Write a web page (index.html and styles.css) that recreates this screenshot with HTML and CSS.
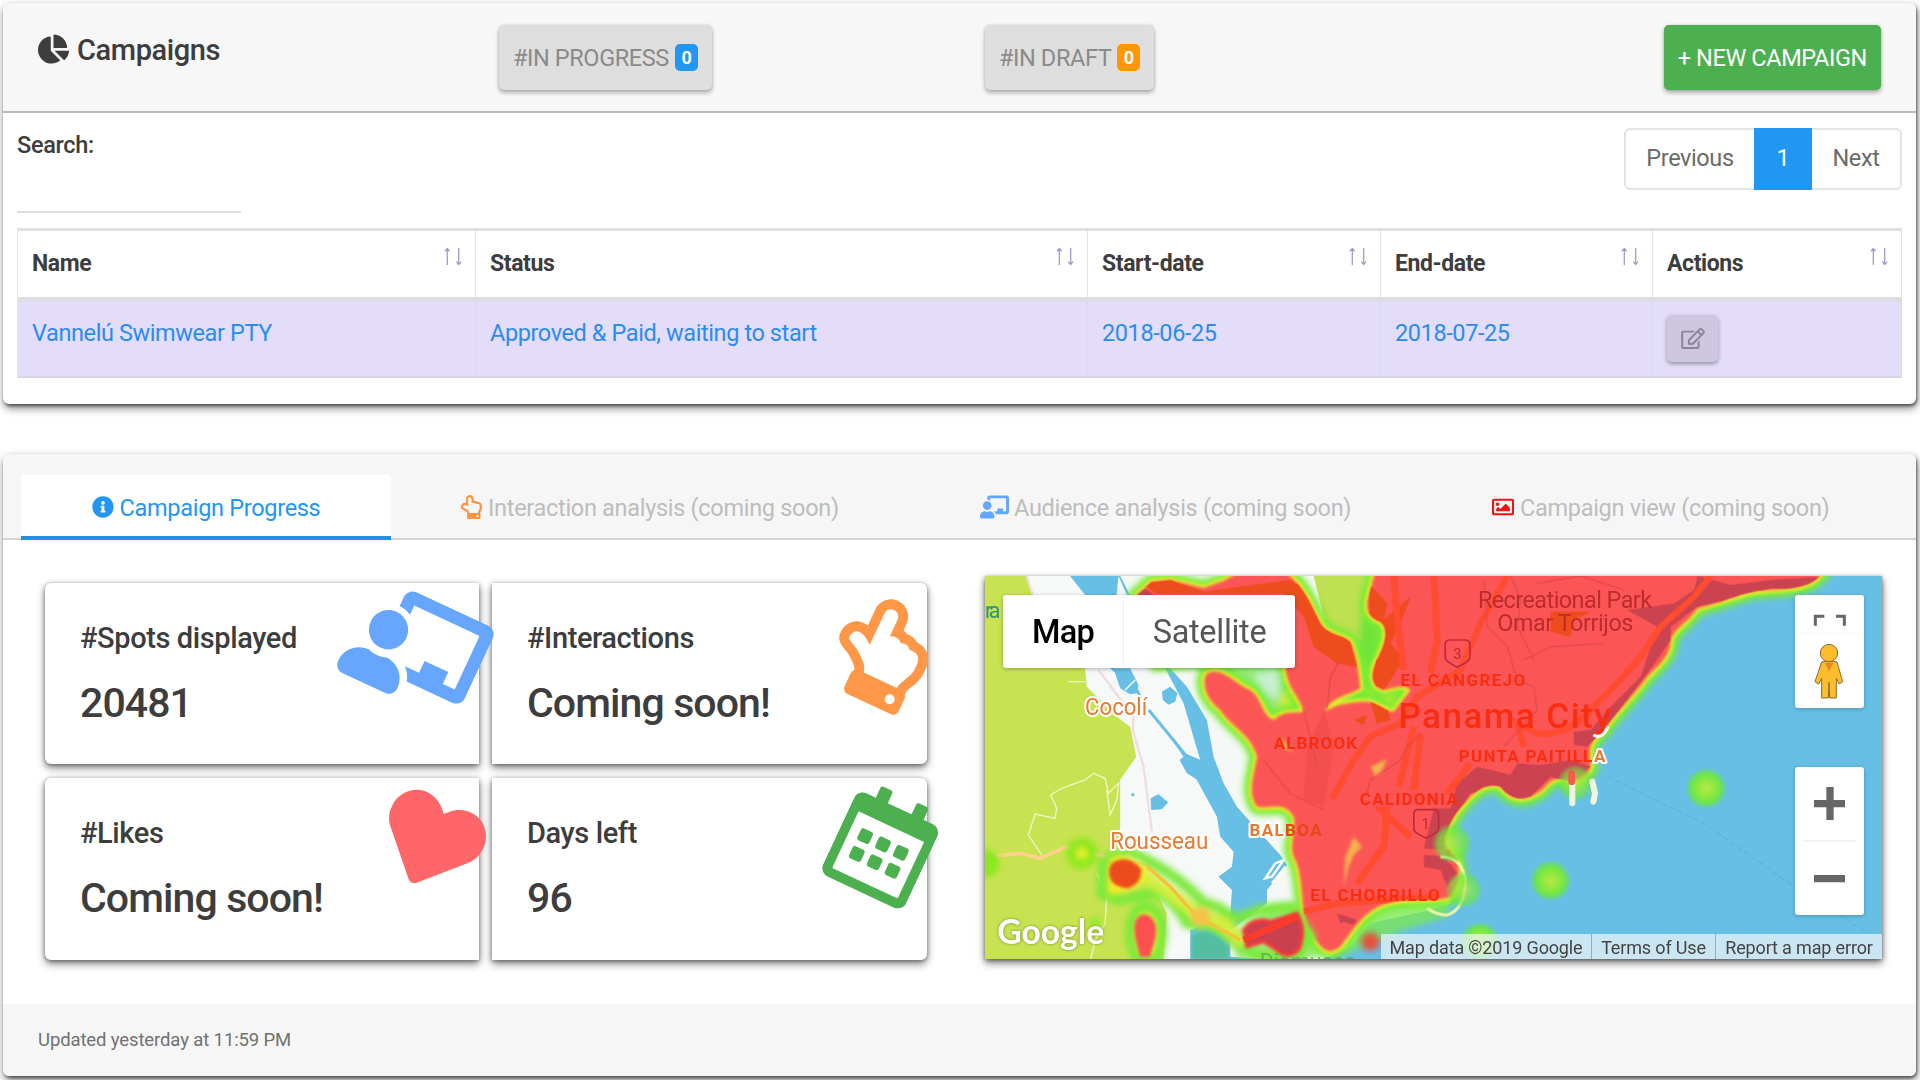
FILE: index.html
```html
<!DOCTYPE html>
<html lang="en">
<head>
<meta charset="utf-8">
<title>Campaigns</title>
<link rel="stylesheet" href="styles.css">
</head>
<body>
<svg width="0" height="0" class="defs" aria-hidden="true">
  <symbol id="i-pie" viewBox="0 0 544 512"><path d="M527.79 288H290.5l158.03 158.03c6.04 6.04 15.98 6.53 22.19.68 38.7-36.46 65.32-85.61 73.13-140.86 1.34-9.46-6.51-17.85-16.06-17.85zm-15.83-64.8C503.72 103.74 408.26 8.28 288.8.04 279.68-.59 272 7.1 272 16.24V240h223.77c9.14 0 16.82-7.68 16.19-16.8zM224 288V50.71c0-9.55-8.39-17.4-17.84-16.06C86.99 51.49-4.1 155.6.14 280.37 4.5 408.51 114.83 513.59 243.03 511.98c50.4-.63 96.97-16.87 135.26-44.03 7.9-5.6 8.42-17.23 1.57-24.08L224 288z"/></symbol>
  <symbol id="i-info" viewBox="0 0 512 512"><path d="M256 8C119 8 8 119 8 256s111 248 248 248 248-111 248-248S393 8 256 8zm0 110a42 42 0 1 1 0 84 42 42 0 0 1 0-84zm56 254c0 7-5 12-12 12h-88c-7 0-12-5-12-12v-24c0-7 5-12 12-12h12v-64h-12c-7 0-12-5-12-12v-24c0-7 5-12 12-12h64c7 0 12 5 12 12v100h12c7 0 12 5 12 12z"/></symbol>
  <symbol id="i-hand" viewBox="0 0 448 512"><path d="M105.6 83.200v86.177a115.520 115.520 0 0 0-22.400-2.176c-47.914 0-83.200 35.072-83.200 92 0 45.314 48.537 57.002 78.784 75.707 12.413 7.735 23.317 16.994 33.253 25.851l.146.131.148.129C129.807 376.338 136 384.236 136 391.200v2.679c-4.952 5.747-8 13.536-8 22.120v64c0 17.673 12.894 32 28.800 32h230.400c15.906 0 28.800-14.327 28.800-32v-64c0-8.584-3.048-16.373-8-22.120V391.200c0-28.688 40-67.137 40-127.200v-21.299c0-62.542-38.658-98.800-91.145-99.940-17.813-12.482-40.785-18.491-62.791-15.985A93.148 93.148 0 0 0 272 118.847V83.200C272 37.765 234.416 0 188.800 0c-45.099 0-83.200 38.101-83.200 83.200zm118.400 0v91.026c14.669-12.837 42.825-14.415 61.050 4.950 19.646-11.227 45.624-1.687 53.625 12.925 39.128-6.524 61.325 10.076 61.325 50.600V264c0 45.491-35.913 77.210-39.676 120H183.571c-2.964-25.239-21.222-42.966-39.596-59.075-12.650-11.341-25.300-21.682-39.625-30.250C82.500 281.500 47.600 270.300 48 259.200c0-24.400 11.200-44 35.200-44 22.200 0 49.600 17.600 70.400 35.200V83.200c0-18.700 16.500-35.200 35.200-35.200 18.976 0 35.200 16.224 35.200 35.200zM352 424c13.255 0 24 10.745 24 24s-10.745 24-24 24-24-10.745-24-24 10.745-24 24-24z" fill-rule="evenodd"/></symbol>
  <symbol id="i-teach" viewBox="0 0 640 512"><path d="M208 352c-2.39 0-4.78.35-7.06 1.09C187.98 357.3 174.35 360 160 360c-14.35 0-27.98-2.7-40.95-6.91-2.28-.74-4.66-1.09-7.05-1.09C49.94 352-.33 402.48 0 464.62.14 490.88 21.73 512 48 512h224c26.27 0 47.86-21.12 48-47.38.33-62.14-49.94-112.62-112-112.62zm-48-32c53.02 0 96-42.98 96-96s-42.98-96-96-96-96 42.98-96 96 42.98 96 96 96zM592 0H208c-26.47 0-48 22.25-48 49.59V96c23.42 0 45.1 6.78 64 17.8V64h352v288h-64v-64H384v64h-76.24c19.1 16.69 33.12 38.73 39.69 64H592c26.47 0 48-22.25 48-49.59V49.59C640 22.25 618.47 0 592 0z"/></symbol>
  <symbol id="i-image" viewBox="0 0 512 512"><path d="M464 64H48C21.5 64 0 85.5 0 112v288c0 26.500 21.500 48 48 48h416c26.500 0 48-21.500 48-48V112c0-26.500-21.500-48-48-48zm-6 336H54c-3.300 0-6-2.700-6-6V118c0-3.300 2.700-6 6-6h404c3.300 0 6 2.700 6 6v276c0 3.300-2.700 6-6 6zM128 152c-22 0-40 18-40 40s18 40 40 40 40-18 40-40-18-40-40-40zM96 352h320v-80l-87.500-87.500c-4.700-4.700-12.300-4.700-17 0L192 304l-39.500-39.500c-4.700-4.700-12.300-4.700-17 0L96 304v48z" fill-rule="evenodd"/></symbol>
  <symbol id="i-heart" viewBox="0 0 512 512"><path d="M462.300 62.600C407.500 15.900 326 24.300 275.700 76.200L256 96.500l-19.700-20.300C186.100 24.300 104.500 15.900 49.700 62.600c-62.800 53.600-66.100 149.800-9.900 207.900l193.500 199.800c12.500 12.900 32.800 12.900 45.300 0l193.500-199.800c56.300-58.100 53-154.300-9.800-207.900z"/></symbol>
  <symbol id="i-cal" viewBox="0 0 448 512"><path d="M148 288h-40c-6.600 0-12-5.400-12-12v-40c0-6.600 5.400-12 12-12h40c6.600 0 12 5.400 12 12v40c0 6.600-5.400 12-12 12zm108-12v-40c0-6.600-5.400-12-12-12h-40c-6.600 0-12 5.400-12 12v40c0 6.600 5.400 12 12 12h40c6.600 0 12-5.400 12-12zm96 0v-40c0-6.600-5.400-12-12-12h-40c-6.600 0-12 5.400-12 12v40c0 6.600 5.400 12 12 12h40c6.600 0 12-5.400 12-12zm-96 96v-40c0-6.600-5.400-12-12-12h-40c-6.600 0-12 5.400-12 12v40c0 6.600 5.400 12 12 12h40c6.600 0 12-5.400 12-12zm-96 0v-40c0-6.600-5.400-12-12-12h-40c-6.600 0-12 5.400-12 12v40c0 6.600 5.400 12 12 12h40c6.600 0 12-5.400 12-12zm192 0v-40c0-6.600-5.400-12-12-12h-40c-6.600 0-12 5.400-12 12v40c0 6.600 5.400 12 12 12h40c6.600 0 12-5.400 12-12zm96-260v352c0 26.500-21.500 48-48 48H48c-26.500 0-48-21.500-48-48V112c0-26.500 21.500-48 48-48h48V12c0-6.600 5.400-12 12-12h40c6.600 0 12 5.400 12 12v52h128V12c0-6.600 5.400-12 12-12h40c6.600 0 12 5.400 12 12v52h48c26.500 0 48 21.500 48 48zm-48 346V160H48v298c0 3.300 2.700 6 6 6h340c3.300 0 6-2.700 6-6z"/></symbol>
  <symbol id="i-edit" viewBox="0 0 576 512"><path d="M402.300 344.900l32-32c5-5 13.700-1.500 13.700 5.700V464c0 26.500-21.500 48-48 48H48c-26.500 0-48-21.500-48-48V112c0-26.500 21.500-48 48-48h273.500c7.100 0 10.700 8.600 5.700 13.700l-32 32c-1.500 1.500-3.500 2.300-5.700 2.300H48v352h352V350.500c0-2.100.8-4.100 2.300-5.600zm156.600-201.800L296.300 405.700l-90.400 10c-26.200 2.900-48.500-19.200-45.600-45.600l10-90.400L432.900 17.100c22.900-22.900 59.900-22.900 82.700 0l43.200 43.200c22.900 22.900 22.900 60 .1 82.800zM460.100 174L402 115.900 216.200 301.800l-7.300 65.300 65.300-7.300L460.100 174zm64.800-79.700l-43.200-43.200c-4.100-4.100-10.800-4.100-14.800 0L436 82l58.100 58.100 30.900-30.900c4-4.200 4-10.800-.1-14.900z"/></symbol>
  <symbol id="i-sort" viewBox="0 0 20 20"><path d="M4 19V2M1.500 4.500L4 1.500l2.500 3M16 1v17M13.500 15.500l2.500 3 2.500-3" fill="none" stroke="currentColor" stroke-width="1.300"/></symbol>
</svg>

<section class="panel campaigns">
  <header class="panel-head">
    <h1 class="title"><svg class="pie"><use href="#i-pie"/></svg>Campaigns</h1>
    <div class="col-progress"><button class="btn grey">#IN PROGRESS<span class="badge blue">0</span></button></div>
    <div class="col-draft"><button class="btn grey">#IN DRAFT<span class="badge orange">0</span></button></div>
    <button class="btn green">+ NEW CAMPAIGN</button>
  </header>
  <div class="tools">
    <label class="search">Search:<input type="text" class="search-input"></label>
    <nav class="pager"><span class="page prev">Previous</span><span class="page current">1</span><span class="page next">Next</span></nav>
  </div>
  <table class="list">
    <colgroup><col class="c-name"><col class="c-status"><col class="c-start"><col class="c-end"><col class="c-actions"></colgroup>
    <thead><tr>
      <th><div class="th">Name<svg class="sort"><use href="#i-sort"/></svg></div></th>
      <th><div class="th">Status<svg class="sort"><use href="#i-sort"/></svg></div></th>
      <th><div class="th">Start-date<svg class="sort"><use href="#i-sort"/></svg></div></th>
      <th><div class="th">End-date<svg class="sort"><use href="#i-sort"/></svg></div></th>
      <th><div class="th">Actions<svg class="sort"><use href="#i-sort"/></svg></div></th>
    </tr></thead>
    <tbody><tr>
      <td>Vannelú Swimwear PTY</td><td>Approved &amp; Paid, waiting to start</td><td>2018-06-25</td><td>2018-07-25</td>
      <td><button class="edit"><svg><use href="#i-edit"/></svg></button></td>
    </tr></tbody>
  </table>
</section>

<section class="panel details">
  <nav class="tabs">
    <a class="tab active"><svg class="ti info"><use href="#i-info"/></svg>Campaign Progress</a>
    <a class="tab t2"><svg class="ti hand"><use href="#i-hand"/></svg>Interaction analysis (coming soon)</a>
    <a class="tab t3"><svg class="ti teach"><use href="#i-teach"/></svg>Audience analysis (coming soon)</a>
    <a class="tab t4"><svg class="ti image"><use href="#i-image"/></svg>Campaign view (coming soon)</a>
  </nav>
  <div class="content">
    <div class="stats">
      <article class="stat left"><h2>#Spots displayed</h2><p>20481</p><svg class="big b-teach" preserveAspectRatio="none"><use href="#i-teach"/></svg></article>
      <article class="stat right"><h2>#Interactions</h2><p>Coming soon!</p><svg class="big b-hand"><use href="#i-hand"/></svg></article>
      <article class="stat left"><h2>#Likes</h2><p>Coming soon!</p><svg class="big b-heart"><use href="#i-heart"/></svg></article>
      <article class="stat right"><h2>Days left</h2><p>96</p><svg class="big b-cal"><use href="#i-cal"/></svg></article>
    </div>
    <div class="map">
      <svg class="canvas" viewBox="45 48 2688 1149" preserveAspectRatio="none">
        <defs>
          <filter id="soft" x="-20%" y="-20%" width="140%" height="140%"><feGaussianBlur stdDeviation="9"/></filter>
          <filter id="soft2" x="-20%" y="-20%" width="140%" height="140%"><feGaussianBlur stdDeviation="4"/></filter>
          <radialGradient id="spot"><stop offset="0" stop-color="#b8e84c"/><stop offset=".4" stop-color="#8fe93c"/><stop offset=".7" stop-color="#6de83e" stop-opacity=".9"/><stop offset="1" stop-color="#68e060" stop-opacity="0"/></radialGradient>
          <path id="heat" d="M500 105L545 65L600 60L700 84L760 62L800 40L950 40C1000 80 1020 130 1050 190C1070 225 1120 225 1140 245C1160 290 1165 340 1170 385C1130 410 1080 410 1065 455C1100 430 1130 430 1170 425C1220 420 1240 455 1270 455L1320 390C1300 370 1270 385 1240 390C1200 380 1200 340 1220 300C1240 260 1260 210 1230 185C1200 175 1180 150 1195 110L1215 30H2560C2530 80 2480 85 2400 90C2320 90 2270 125 2180 145C2150 190 2110 205 2100 240C2100 290 2060 320 2030 350C1980 420 1940 450 1900 510C1850 550 1855 570 1860 620C1850 650 1820 665 1800 665C1760 645 1740 660 1715 690C1660 730 1620 720 1590 680C1560 670 1530 680 1500 710C1460 750 1420 800 1425 860C1470 890 1480 950 1440 1010C1380 1030 1320 1010 1250 1030C1180 1050 1150 1110 1110 1160C1060 1200 1040 1140 1010 1100C990 1040 1000 960 975 900C950 860 980 820 970 770C940 720 900 750 860 740C830 700 850 650 860 590C840 520 780 500 750 450C710 420 690 370 710 340C760 320 790 370 840 390C880 420 870 460 910 480C940 450 970 460 1000 455C990 410 940 380 945 300L700 300L560 310L500 200Z"/>
          <clipPath id="heatclip"><use href="#heat"/></clipPath>
        </defs>
        <rect x="45" y="48" width="2688" height="1149" fill="#68bfe6"/>
        <!-- land west of the canal -->
        <path d="M45 48H300L345 105L420 325L500 400L545 450L640 590L680 660L740 770L750 830L790 875L785 920L745 950L785 990L780 1060L660 1110V1197H45Z" fill="#f7f8f8"/>
        <path d="M445 48L470 105L585 325L640 430L690 600L650 585L530 440L505 390L490 350L430 325L440 100Z" fill="#f7f8f8"/>
        <path d="M450 48H1440V1030L1380 1050L1200 1090L1140 1160L1060 1197H900L780 1190L780 1110L890 1030L890 990L950 915L930 885L880 830L800 740L760 670L730 590L710 480L650 380L600 325L480 105Z" fill="#f5f8f6"/>
        <path d="M45 48H170L185 100L345 325L350 380L440 470L480 500L498 590L450 660V800L440 880L540 960L590 1060L580 1197H45Z" fill="#c8e351"/>
        <path d="M1030 48H1215L1190 150L1230 190L1200 370L1170 370L1140 240L1070 210Z" fill="#bfe052"/>
        <path d="M430 325H480L505 375L500 400L480 403L450 385ZM575 395L600 380L622 400L615 425L595 434L578 420ZM541 715L565 703L594 727L575 748L543 750ZM628 600L650 582L690 600L720 660L690 665L650 640Z" fill="#68bfe6"/>
        <path d="M465 390L495 360" stroke="#eef4f6" stroke-width="5"/>
        <path d="M536 450L650 590" stroke="#68bfe6" stroke-width="9"/>
        <circle cx="488" cy="704" r="5" fill="#68bfe6"/>
        <path d="M885 955L915 910L940 900L905 950ZM905 970L945 920" stroke="#fff" stroke-width="7" fill="#68bfe6"/>
        <g fill="none" stroke="#f0f5c8" stroke-width="4">
          <path d="M215 885L175 825L195 762L255 775L260 745L242 705L275 685L345 660L370 640L405 655L415 700L445 670L440 720L420 765L410 690M295 365H345M380 940L410 1010L405 1090L375 1140L362 1197"/>
        </g>
        <path d="M385 330L490 470L488 510L520 620L545 815M170 48L190 110" fill="none" stroke="#eedfdc" stroke-width="7"/>
        <path d="M80 887L150 880L210 895L285 862L340 878L390 885L530 915L600 980L680 1070L810 1140" fill="none" stroke="#ffd18a" stroke-width="11"/>
        <!-- density overlay -->
        <g filter="url(#soft)">
          <path d="M640 325L945 325L1000 455L900 490L870 440L840 390L740 335Z" fill="#7de65a" opacity=".8"/>
          <path d="M850 345L930 330L920 420L890 400Z" fill="#c8efcf"/>
          <path d="M945 370L1005 455L900 490L925 440Z" fill="#d5ea3a"/>
          <path d="M1170 170L1240 195L1205 320L1170 320Z" fill="#70e23a"/>
          <path d="M1175 370L1210 385L1320 385L1270 450L1170 425L1070 450L1090 405Z" fill="#cfe62c"/>
          <path d="M900 1040L1440 1000L1430 1070L1300 1110L1130 1180L1000 1197H800L780 1130Z" fill="#7be84d" opacity=".75"/>
          <use href="#heat" fill="none" stroke="#78eb34" stroke-width="48"/>
        </g>
        <use href="#heat" fill="none" stroke="#e6f52c" stroke-width="17" filter="url(#soft2)"/>
        <use href="#heat" fill="#fc5556" filter="url(#soft2)"/>
        <g clip-path="url(#heatclip)">
          <g fill="#cb4350">
            <path d="M2180 48L2280 75L2400 60L2600 48V90L2400 85L2270 120L2180 140L2100 200L2100 240L2030 340L1900 510L1850 560L1810 555V515L1860 510L1920 440L2010 350L2060 200L1970 150L2110 130L2170 90Z"/>
            <path d="M1460 670L1520 620L1620 645L1640 610L1710 615L1800 600L1860 620L1800 670L1740 650L1660 730L1590 690L1500 700L1420 830L1430 900L1460 940L1430 980L1410 930L1360 920V885L1440 890V870L1360 865L1390 745H1440Z"/>
            <path d="M500 105L525 85L550 105ZM1100 1060L1160 1080L1150 1095L1120 1085L1110 1090Z"/>
          </g>
          <path d="M510 70L600 60L700 95L960 60L1010 90L1050 190L1110 225L1140 245L1160 320L1100 310L1030 260L1000 170L940 100H560ZM1195 70L1250 130L1240 180L1320 110L1290 190L1260 250L1300 300L1240 390L1200 370ZM1150 480L1190 465L1180 495ZM1200 425L1250 440L1260 480L1220 490ZM1740 155L1860 155L1810 180L1800 230L1740 215Z" fill="#ee4c1c"/>
          <path d="M1060 450L1090 560L1060 740L1000 720L1010 570Z" fill="#ef4d4d" opacity=".7"/>
          <g fill="none" stroke="#ff4b30" stroke-width="22">
            <path d="M1085 715L1150 600L1200 530L1290 490L1340 410L1470 330L1530 190L1610 48" stroke-width="18"/>
            <path d="M1285 680L1330 500M1330 690L1350 520M1270 48L1280 180L1300 330M1390 48L1400 240L1380 340M1430 700L1500 610M1220 740L1320 830M1250 740L1240 860L1160 970" stroke-width="20"/>
            <path d="M2220 48L2170 110L2070 200L2010 290L1940 370L1850 460Q1780 530 1700 520L1640 490L1660 560" stroke-width="19"/>
            <path d="M800 1130L980 1060L1100 1030L1400 1010" stroke-width="20"/>
          </g>
          <g fill="none" stroke="#d9484f" stroke-width="3">
            <path d="M1350 520L1310 560L1290 600L1200 660L1190 700M1540 60L1550 200L1610 260L1640 360L1690 380L1700 450L1600 560M1620 48L1650 120L1640 200L1690 300M1700 70L1830 48L1960 90M1660 300L1740 260L1900 250M1040 620L1000 450L920 330M880 600L960 700L1060 750M1110 300L1080 350L1070 450"/>
          </g>
          <g fill="#f5b050" filter="url(#soft2)"><path d="M1200 620L1250 597L1235 630L1215 650ZM1150 830L1175 860L1150 885L1135 920L1120 980L1125 890ZM925 525L970 575L940 565Z"/></g>
        </g>
        <g filter="url(#soft)">
          <circle cx="335" cy="880" r="46" fill="#8ae81d"/><circle cx="48" cy="910" r="40" fill="#8ae81d"/><circle cx="375" cy="1090" r="22" fill="#a0e830"/>
          <path d="M400 910Q450 850 530 900Q640 960 700 1030Q760 1040 790 1080L870 1050L960 1040L1020 1130L980 1190H870L800 1150L720 1100L650 1090Q600 1000 540 1000L450 1020L395 1000Z" fill="none" stroke="#7ce93a" stroke-width="32"/>
          <path d="M525 1040C590 1050 580 1130 560 1197H500C470 1130 475 1050 525 1040Z" fill="#e6f52c" stroke="#7ce93a" stroke-width="32"/>
          <path d="M500 930L600 1000L680 1060L760 1090L820 1150" fill="none" stroke="#d4ee40" stroke-width="38"/>
          <circle cx="335" cy="880" r="18" fill="#e6ee30"/>
        </g>
        <path d="M530 920L600 980L680 1070L810 1140" fill="none" stroke="#f5c23a" stroke-width="10"/>
        <path d="M420 895Q470 870 525 925Q535 965 480 990L415 1005Z" fill="#f5ec20" filter="url(#soft)"/>
        <path d="M425 910Q470 880 512 925Q520 965 475 985Q410 980 418 925Z" fill="#ee4c1c" filter="url(#soft2)"/>
        <path d="M495 1085C510 1050 550 1060 557 1100C560 1140 545 1160 540 1190H510C500 1150 488 1120 495 1085Z" fill="#fc5050" filter="url(#soft2)"/>
        <path d="M820 1110Q850 1070 900 1085L980 1060Q1010 1110 985 1170Q950 1200 920 1170L880 1145L830 1160Z" fill="#c9414f" stroke="#fb3535" stroke-width="10" filter="url(#soft2)"/>
        <path d="M820 1140L980 1070" stroke="#fd3b2c" stroke-width="20"/>
        <path d="M665 1130Q710 1090 775 1160V1197H665Z" fill="#52bfa0" filter="url(#soft2)"/>
        <circle cx="690" cy="1070" r="28" fill="#f8bf48" filter="url(#soft)"/>
        <circle cx="1200" cy="1145" r="28" fill="#e6503a" filter="url(#soft)"/>
        <path d="M1410 890Q1480 890 1485 970Q1480 1050 1430 1065Q1400 1065 1370 1045" fill="none" stroke="#e9f5a8" stroke-width="9"/>
        <circle cx="1445" cy="850" r="62" fill="url(#spot)" opacity=".75"/><circle cx="1480" cy="990" r="58" fill="url(#spot)" opacity=".7"/>
        <circle cx="2206" cy="685" r="64" fill="url(#spot)"/><circle cx="1740" cy="962" r="64" fill="url(#spot)"/><circle cx="1528" cy="1145" r="62" fill="url(#spot)"/>
        <circle cx="1815" cy="670" r="58" fill="url(#spot)" opacity=".7"/>
        <path d="M1805 675V730M1865 665L1873 700L1868 725" fill="none" stroke="#edf7dd" stroke-width="18" stroke-linecap="round"/>
        <path d="M1803 640V665" stroke="#f65a4a" stroke-width="20" stroke-linecap="round"/>
        <path d="M1910 650L2200 790L2470 980L2690 1120" fill="none" stroke="#5ab1da" stroke-width="3" stroke-dasharray="18 8"/>
        <!-- labels -->
        <g class="lbl">
          <text x="45" y="174" font-size="64" fill="#2c9180" textLength="46">ra</text>
          <g fill="#e9792e" stroke="#fff" stroke-width="12" paint-order="stroke" stroke-linejoin="round">
            <text x="345" y="464" font-size="70" textLength="186" lengthAdjust="spacingAndGlyphs">Cocolí</text>
            <text x="420" y="866" font-size="70" textLength="294" lengthAdjust="spacingAndGlyphs">Rousseau</text>
            <text x="838" y="827" font-size="51" font-weight="700" textLength="102">BAL</text>
            <text x="1870" y="606" font-size="51" font-weight="700">A</text>
          </g>
          <g fill="#fa2d10" font-weight="700">
            <text x="944" y="827" font-size="51" textLength="110" fill="#e54518">BOA</text>
            <text x="910" y="567" font-size="51" textLength="250">ALBROOK</text>
            <text x="1290" y="379" font-size="51" textLength="374">EL CANGREJO</text>
            <text x="1168" y="734" font-size="51" textLength="294">CALIDONIA</text>
            <text x="1465" y="606" font-size="51" textLength="400">PUNTA PAITILL</text>
            <text x="1020" y="1022" font-size="51" textLength="388">EL CHORRILLO</text>
            <text x="1284" y="504" font-size="105" textLength="638" font-weight="500">Panama City</text>
          </g>
          <path d="M1868 525Q1895 540 1912 500" fill="none" stroke="#fff" stroke-width="9"/>
          <g fill="#bd2b2b">
            <text x="1522" y="143" font-size="70" textLength="522">Recreational Park</text>
            <text x="1580" y="214" font-size="70" textLength="408">Omar Torrijos</text>
            <text x="1448" y="296" font-size="44">3</text>
            <text x="1353" y="807" font-size="44">1</text>
          </g>
          <path d="M1434 240H1486Q1498 242 1498 254V295Q1494 305 1460 322Q1427 305 1424 295V254Q1424 242 1434 240ZM1340 749H1394Q1404 750 1404 762V810Q1400 820 1367 834Q1334 820 1330 810V762Q1330 750 1340 749Z" fill="none" stroke="#bd2b3b" stroke-width="5"/>
          <text x="868" y="1228" font-size="64" fill="#4aa05a" textLength="290" opacity=".7">Diamuseo</text>
          <text x="82" y="1153" font-size="104" fill="#fff" class="glogo" textLength="320" lengthAdjust="spacingAndGlyphs">Google</text>
        </g>
      </svg>
      <div class="types"><span class="type on">Map</span><span class="type">Satellite</span></div>
      <div class="pegbox">
        <svg viewBox="0 0 207 339"><path d="M61 92V64H88M123 64H148V92" fill="none" stroke="#666" stroke-width="9"/><path d="M12 114H195" stroke="#f2f2f2" stroke-width="2"/><g fill="#fbbd2b" stroke="#8a6b33" stroke-width="3"><path d="M80 201Q102 192 126 201L143 260L133 267L124 250V309H104L102 262L100 309H80V250L71 267L60 260Z"/><circle cx="102" cy="174" r="26"/></g><path d="M90 203H115L102 230Z" fill="#e6881f"/></svg>
      </div>
      <div class="zoombox">
        <svg viewBox="0 0 207 444"><path d="M57 110H150M105 60V159M57 335H150" stroke="#666" stroke-width="22"/><path d="M25 222H182" stroke="#e2e2e2" stroke-width="3"/></svg>
      </div>
      <div class="credits"><span class="c1">Map data ©2019 Google</span><span class="c2">Terms of Use</span><span class="c3">Report a map error</span></div>
    </div>
  </div>
  <footer class="foot">Updated yesterday at 11:59 PM</footer>
</section>
</body>
</html>
```
FILE: styles.css
```css
* { box-sizing: border-box; }
body { margin: 0; height: 1080px; overflow: hidden; padding: 3px 4px 0 3px; background: #fff; color: #3d3d3d; font-family: Roboto, "Liberation Sans", sans-serif; font-size: 23.500px; letter-spacing: -.4px; }
.defs { position: absolute; }
svg { fill: currentColor; display: block; flex: none; }
h1, h2, p { margin: 0; font-weight: 500; }
button { font: inherit; letter-spacing: inherit; border: 0; }

.panel { background: #fff; border-radius: 6px; box-shadow: 1px 4px 9px rgba(0,0,0,.5), 1px 2px 3px rgba(0,0,0,.45); }
.campaigns { height: 401px; }
.details { margin-top: 50px; height: 622px; display: flex; flex-direction: column; }

.panel-head { height: 110px; display: flex; align-items: flex-start; background: #f7f7f7; border-bottom: 2px solid #bbb; border-radius: 6px 6px 0 0; padding: 22px 35px 0 35px; }
.title { width: 461px; display: flex; align-items: center; gap: 8px; font-size: 29px; line-height: 50px; height: 52px; padding-bottom: 2px; }
.pie { width: 31px; height: 30px; margin-top: -2px; }
.col-progress { width: 486px; }
.col-draft { flex: 1; }
.btn { height: 65px; padding: 0 14px; border-radius: 5px; display: flex; align-items: center; white-space: nowrap; box-shadow: 0 3px 4px rgba(0,0,0,.28), 0 0 3px rgba(0,0,0,.15); }
.grey { background: #dedede; color: #8a8a8a; }
.green { background: #4caf50; color: #fff; }
.badge { width: 23px; height: 27px; margin-left: 6px; border-radius: 5px; color: #fff; font-weight: 700; font-size: 18px; line-height: 27px; text-align: center; }
.blue { background: #2196f3; }
.orange { background: #ff9800; }

.tools { height: 115px; padding: 15px 14px 0 14px; display: flex; justify-content: space-between; }
.search { display: flex; flex-direction: column; width: 224px; line-height: 35px; font-weight: 500; letter-spacing: -.3px; }
.search-input { border: 0; border-bottom: 2px solid #ddd; width: 224px; height: 50px; background: transparent; }
.pager { display: flex; height: 62px; border: 2px solid #e2e4e7; border-radius: 6px; color: #6a6a6a; line-height: 57px; text-align: center; }
.prev { width: 128px; }
.current { width: 58px; margin: -2px 0; line-height: 61px; background: #2196f3; color: #fff; }
.next { width: 88px; }

.list { width: 1885px; margin-left: 14px; border-collapse: separate; border-spacing: 0; table-layout: fixed; border-left: 1px solid #dee2e6; border-top: 3px solid #dee0e4; }
.c-name { width: 458px; } .c-status { width: 612px; } .c-start { width: 293px; } .c-end { width: 272px; }
.list th { height: 71px; padding: 0; border-right: 1px solid #dee2e6; border-bottom: 5px solid #dcdde6; text-align: left; font-weight: 700; font-size: 23px; }
.th { display: flex; justify-content: space-between; padding: 0 12px 2px 14px; }
.sort { width: 20px; height: 19px; margin-top: -3px; color: #9d97c9; }
.list td { height: 76px; padding: 14px 0 0 14px; vertical-align: top; line-height: 34px; color: #2b8cf0; background: #e3ddf9; border-right: 1px solid #dcdaf0; border-bottom: 2px solid #d8d5e8; }
.list td:last-child { padding: 13px 0 0 14px; }
.edit { width: 51px; height: 47px; border-radius: 5px; background: #cec7e2; color: #8a859b; display: flex; align-items: center; justify-content: center; padding: 0; box-shadow: 0 2px 4px rgba(0,0,0,.35); }
.edit svg { width: 24px; height: 21px; }

.tabs { height: 86px; display: flex; align-items: flex-end; background: #f6f6f6; border-bottom: 2px solid #d3d3d3; border-radius: 6px 6px 0 0; padding-left: 18px; }
.tab { display: flex; align-items: center; height: 65px; color: #bdbdbd; white-space: nowrap; padding-top: 4px; letter-spacing: -.3px; }
.active { width: 370px; justify-content: center; color: #2196f3; background: #fff; border-bottom: 4px solid #2490e0; border-radius: 4px 4px 0 0; margin-bottom: -2px; }
.t2 { width: 519px; padding-left: 70px; } .t3 { width: 512px; padding-left: 70px; } .t4 { padding-left: 70px; }
.ti { height: 24px; margin: -2px 6px 0 0; }
.info { width: 22px; } .hand { width: 21px; color: #ff9442; } .teach { width: 29px; margin-right: 5px; color: #66a6ff; } .image { width: 22px; color: #f31212; }

.content { height: 464px; display: flex; padding: 0 0 0 42px; }
.stats { width: 882px; margin-top: 43px; display: grid; grid-template-columns: 434px 435px; grid-template-rows: 181px 182px; gap: 14px 13px; }
.stat { position: relative; padding: 39px 0 0 35px; box-shadow: 0 4px 8px rgba(0,0,0,.45), 0 1px 4px rgba(0,0,0,.4); background: #fff; }
.left { border-radius: 6px 0 0 6px; } .right { border-radius: 0 6px 6px 0; }
.stat h2 { font-size: 29px; line-height: 33px; }
.stat p { font-size: 41px; line-height: 48px; margin-top: 24px; letter-spacing: -.9px; }
.left { z-index: 1; }
.big { position: absolute; transform: rotate(25deg); }
.b-teach { color: #66a6ff; width: 131px; height: 105px; right: -2px; top: 14px; }
.b-hand { color: #ff9748; width: 93px; height: 106px; right: -2px; top: 16px; }
.b-heart { color: #ff6669; width: 101px; height: 101px; right: -2px; top: 14px; }
.b-cal { color: #4caf50; width: 92px; height: 107px; right: -2px; top: 13px; }

.map { position: relative; width: 897px; height: 383px; margin: 36px 0 0 58px; box-shadow: 0 4px 8px rgba(0,0,0,.5), 0 1px 4px rgba(0,0,0,.4); }
.canvas { width: 897px; height: 383px; }
.lbl { font-family: Roboto, sans-serif; letter-spacing: 0; }
.glogo { font-family: Lato, sans-serif; font-weight: 700; filter: drop-shadow(0 0 4px rgba(0,0,0,.4)); }
.types { position: absolute; left: 18px; top: 19px; height: 73px; width: 292px; background: #fff; border-radius: 3px; display: flex; line-height: 74px; font-size: 32.500px; color: #565656; box-shadow: 0 1px 4px rgba(0,0,0,.3); letter-spacing: -.3px; }
.type { flex: 1; text-align: center; }
.on { flex: none; width: 121px; color: #000; font-weight: 500; border-right: 1px solid #f0f0f0; letter-spacing: -.8px; }
.pegbox, .zoombox { position: absolute; left: 810px; width: 69px; background: #fff; border-radius: 3px; box-shadow: 0 1px 4px rgba(0,0,0,.25); }
.pegbox { top: 19px; height: 113px; }
.zoombox { top: 191px; height: 148px; }
.pegbox svg, .zoombox svg { width: 100%; height: 100%; }
.credits { position: absolute; right: 0; bottom: 0; height: 25px; display: flex; color: #444; font-size: 18px; line-height: 27px; letter-spacing: -.15px; }
.credits span { height: 25px; background: rgba(235,243,247,.75); margin-left: 1px; white-space: nowrap; text-align: center; }
.c1 { width: 210px; } .c2 { width: 123px; } .c3 { width: 166px; }

.foot { height: 72px; background: #f6f6f6; color: #717171; font-size: 18.500px; line-height: 72px; padding-left: 35px; border-radius: 0 0 6px 6px; letter-spacing: -.12px; }
```
